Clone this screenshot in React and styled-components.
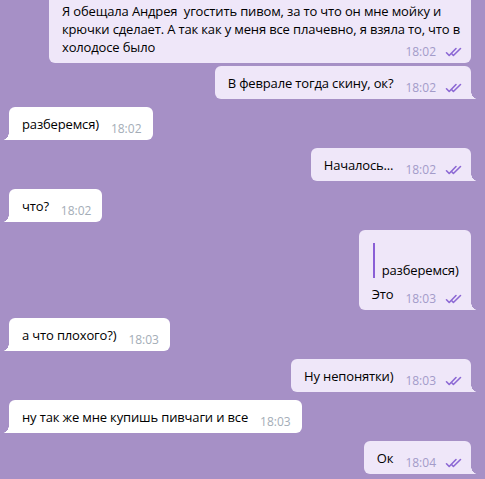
import React from 'react';
import styled, { createGlobalStyle, css } from 'styled-components';

const BG = '#a690c6';
const OUT = '#efe7f9';
const IN = '#ffffff';

const Global = createGlobalStyle`
  html, body { margin: 0; padding: 0; background: ${BG}; }
  body { font-family: "Open Sans", "Noto Sans", sans-serif; }
`;

const Chat = styled.div`
  height: 479px;
  overflow: hidden;
  display: flex;
  flex-direction: column;
  justify-content: flex-end;
  padding: 0 14px 5px 9px;
  box-sizing: border-box;
  background: ${BG};
`;

const tailOut = css`
  border-bottom-right-radius: 0;
  &::after {
    content: '';
    position: absolute;
    right: -6px;
    bottom: 0;
    width: 6px;
    height: 8px;
    background: radial-gradient(6px 8px at 100% 0, transparent 94%, ${OUT} 100%);
  }
`;

const tailIn = css`
  border-bottom-left-radius: 0;
  &::after {
    content: '';
    position: absolute;
    left: -6px;
    bottom: 0;
    width: 6px;
    height: 8px;
    background: radial-gradient(6px 8px at 0 0, transparent 94%, ${IN} 100%);
  }
`;

const Bubble = styled.div`
  position: relative;
  flex-shrink: 0;
  align-self: ${p => (p.$out ? 'flex-end' : 'flex-start')};
  max-width: 422px;
  box-sizing: border-box;
  margin-top: ${p => (p.$cont ? 3 : 8)}px;
  padding: 8px ${p => (p.$out ? 8 : 11)}px 7px 13px;
  background: ${p => (p.$out ? OUT : IN)};
  border-radius: 6px;
  display: flow-root;
  font-size: 13px;
  line-height: 18px;
  color: #000;
  ${p => p.$tail && (p.$out ? tailOut : tailIn)}
`;

const Text = styled.div`
  white-space: pre-wrap;
  letter-spacing: -0.15px;
`;

const Meta = styled.span`
  float: right;
  display: flex;
  align-items: center;
  gap: 9px;
  margin: 7px 0 -7px 12px;
  font-size: 12px;
  line-height: 14px;
  letter-spacing: 0;
  color: ${p => (p.$out ? '#a39bc9' : '#a4adb7')};
`;

const Quote = styled.div`
  margin: 5px 0 7px 1px;
  border-left: 2px solid #8a5fd6;
  padding-left: 7px;
  letter-spacing: -0.15px;
`;

const QuoteName = styled.div`
  height: 20px;
`;

const QuoteText = styled.div`
  line-height: 15px;
`;

const Checks = () => (
  <svg width="18" height="10" viewBox="0 0 18 10">
    <path
      d="M1.5 5.8 L4.2 8.5 L11 1.5 M6.8 6.8 L8.4 8.5 L15.5 1.5"
      stroke="#8c68d4"
      strokeWidth="1.6"
      fill="none"
      strokeLinecap="round"
      strokeLinejoin="round"
    />
  </svg>
);

const messages = [
  { out: true, tail: false, time: '18:02', text: 'Я обещала Андрея  угостить пивом, за то что он мне мойку и крючки сделает. А так как у меня все плачевно, я взяла то, что в холодосе было' },
  { out: true, cont: true, tail: true, time: '18:02', text: 'В феврале тогда скину, ок?' },
  { out: false, tail: true, time: '18:02', text: 'разберемся)' },
  { out: true, tail: true, time: '18:02', text: 'Началось...' },
  { out: false, tail: true, time: '18:02', text: 'что?' },
  { out: true, tail: true, time: '18:03', text: 'Это', quote: 'разберемся)' },
  { out: false, tail: true, time: '18:03', text: 'а что плохого?)' },
  { out: true, tail: true, time: '18:03', text: 'Ну непонятки)' },
  { out: false, tail: true, time: '18:03', text: 'ну так же мне купишь пивчаги и все' },
  { out: true, tail: true, time: '18:04', text: 'Ок' },
];

export default function App() {
  return (
    <>
      <Global />
      <Chat>
        {messages.map((m, i) => (
          <Bubble key={i} $out={m.out} $cont={m.cont} $tail={m.tail}>
            {m.quote && (
              <Quote>
                <QuoteName />
                <QuoteText>{m.quote}</QuoteText>
              </Quote>
            )}
            <Text>
              {m.text}
              <Meta $out={m.out}>
                {m.time}
                {m.out && <Checks />}
              </Meta>
            </Text>
          </Bubble>
        ))}
      </Chat>
    </>
  );
}
